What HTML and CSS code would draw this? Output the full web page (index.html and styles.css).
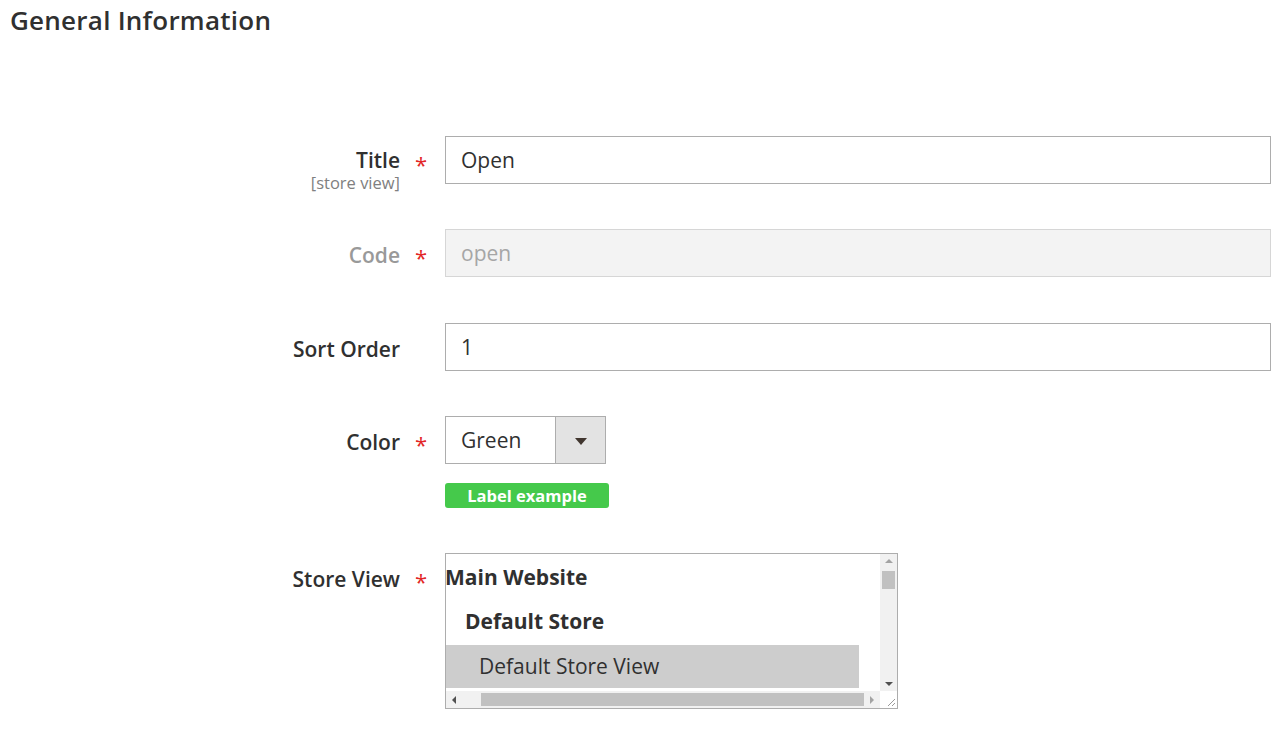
FILE: index.html
```html
<!DOCTYPE html>
<html lang="en">
<head>
    <meta charset="UTF-8">
    <title>General Information</title>
    <link rel="stylesheet" href="styles.css">
</head>
<body>
    <div class="page">
        <h1 class="section-title">General Information</h1>

        <form class="admin-form">
            <div class="field">
                <div class="field-label with-scope">
                    <span>Title</span>
                    <span class="scope">[store view]</span>
                </div>
                <div class="required">*</div>
                <div class="field-control">
                    <input class="text-input" type="text" value="Open">
                </div>
            </div>

            <div class="field">
                <div class="field-label disabled"><span>Code</span></div>
                <div class="required">*</div>
                <div class="field-control">
                    <input class="text-input" type="text" value="open" disabled>
                </div>
            </div>

            <div class="field">
                <div class="field-label"><span>Sort Order</span></div>
                <div class="required"></div>
                <div class="field-control">
                    <input class="text-input" type="text" value="1">
                </div>
            </div>

            <div class="field">
                <div class="field-label"><span>Color</span></div>
                <div class="required">*</div>
                <div class="field-control">
                    <div class="select-box">
                        <span class="select-value">Green</span>
                        <span class="select-button"><span class="arrow"></span></span>
                    </div>
                    <div class="label-example">Label example</div>
                </div>
            </div>

            <div class="field store-field">
                <div class="field-label"><span>Store View</span></div>
                <div class="required">*</div>
                <div class="field-control">
                    <div class="multiselect">
                        <div class="options">
                            <div class="opt group">Main Website</div>
                            <div class="opt group store">Default Store</div>
                            <div class="opt view selected">Default Store View</div>
                        </div>
                        <div class="vscroll">
                            <span class="sb-arrow up"></span>
                            <span class="vthumb"></span>
                            <span class="sb-arrow down"></span>
                        </div>
                        <div class="hscroll">
                            <span class="sb-arrow left"></span>
                            <span class="hthumb"></span>
                            <span class="sb-arrow right"></span>
                        </div>
                        <div class="corner">
                            <svg width="17" height="17" viewBox="0 0 17 17">
                                <path d="M8 15 L15 8 M12 15 L15 12" stroke="#9a9a9a" stroke-width="1" fill="none"/>
                            </svg>
                        </div>
                    </div>
                </div>
            </div>
        </form>
    </div>
</body>
</html>
```

FILE: styles.css
```css
body {
    margin: 0;
    padding: 0;
    background: #fff;
    font-family: "Open Sans", "Noto Sans", sans-serif;
    color: #303030;
}

.page {
    padding: 5px 16px 0 10px;
}

.section-title {
    margin: 0;
    font-size: 26px;
    font-weight: 600;
    line-height: 1.2;
    letter-spacing: 0.25px;
    color: #303030;
}

.admin-form {
    margin-top: 100px;
    margin-left: -10px;
}

.field {
    display: grid;
    grid-template-columns: 400px 45px 1fr;
    align-items: start;
    margin-bottom: 45px;
}

.field:nth-child(2) {
    margin-bottom: 46px;
}

.field-label {
    display: flex;
    flex-direction: column;
    align-items: flex-end;
    box-sizing: border-box;
    height: 48px;
    padding-top: 12px;
    font-size: 21px;
    font-weight: 600;
    line-height: 28px;
    color: #303030;
}

.field-label.with-scope {
    padding-top: 10px;
}

.field-label.disabled {
    color: #999;
}

.scope {
    font-size: 16.5px;
    font-weight: 400;
    line-height: 18px;
    color: #808080;
}

.required {
    box-sizing: border-box;
    height: 48px;
    padding: 14px 0 0 15px;
    font-size: 22px;
    line-height: 28px;
    color: #e22626;
}

.text-input {
    display: block;
    box-sizing: border-box;
    width: 100%;
    height: 48px;
    padding: 0 15px;
    border: 1px solid #adadad;
    font-family: inherit;
    font-size: 21px;
    color: #303030;
    background: #fff;
    outline: none;
}

.text-input:disabled {
    background: #f3f3f3;
    border-color: #d6d6d6;
    color: #a6a6a6;
}

/* select */
.select-box {
    display: flex;
    box-sizing: border-box;
    width: 161px;
    height: 48px;
    border: 1px solid #adadad;
}

.select-value {
    flex: 1;
    padding-left: 15px;
    font-size: 21px;
    line-height: 46px;
}

.select-button {
    display: flex;
    align-items: center;
    justify-content: center;
    width: 49px;
    background: #e3e3e3;
    border-left: 1px solid #adadad;
}

.arrow {
    width: 0;
    height: 0;
    border-left: 6px solid transparent;
    border-right: 6px solid transparent;
    border-top: 7px solid #41362f;
    margin-top: 2px;
}

.label-example {
    width: 164px;
    height: 25px;
    margin-top: 19px;
    border-radius: 3px;
    background: #45c94b;
    color: #fff;
    font-size: 16.5px;
    font-weight: 700;
    line-height: 25px;
    text-align: center;
}

/* multiselect */
.multiselect {
    position: relative;
    box-sizing: border-box;
    width: 453px;
    height: 156px;
    border: 1px solid #adadad;
    overflow: hidden;
}

.options {
    padding-top: 1px;
    width: 413px;
}

.opt {
    height: 44px;
    font-size: 21px;
    line-height: 44px;
    white-space: nowrap;
}

.opt.group {
    font-weight: 700;
    margin-left: -1px;
}

.opt.store {
    padding-left: 20px;
    height: 46px;
}

.opt.view {
    padding-left: 33px;
    height: 43px;
    line-height: 43px;
}

.opt.selected {
    background: #cdcdcd;
}

.vscroll {
    position: absolute;
    top: 0;
    right: 0;
    width: 17px;
    bottom: 17px;
    background: #f1f1f1;
}

.vthumb {
    position: absolute;
    top: 17px;
    left: 2px;
    width: 13px;
    height: 18px;
    background: #c1c1c1;
}

.hscroll {
    position: absolute;
    left: 0;
    right: 17px;
    bottom: 0;
    height: 17px;
    background: #f1f1f1;
}

.hthumb {
    position: absolute;
    left: 35px;
    top: 2px;
    width: 383px;
    height: 13px;
    background: #c1c1c1;
}

.corner {
    position: absolute;
    right: 0;
    bottom: 0;
    width: 17px;
    height: 17px;
    background: #fff;
}

.corner svg {
    display: block;
}

.sb-arrow {
    position: absolute;
    width: 0;
    height: 0;
}

.sb-arrow.up {
    top: 5px;
    left: 5px;
    border-left: 4px solid transparent;
    border-right: 4px solid transparent;
    border-bottom: 4px solid #a3a3a3;
}

.sb-arrow.down {
    bottom: 5px;
    left: 5px;
    border-left: 4px solid transparent;
    border-right: 4px solid transparent;
    border-top: 4px solid #505050;
}

.sb-arrow.left {
    left: 6px;
    top: 5px;
    border-top: 4px solid transparent;
    border-bottom: 4px solid transparent;
    border-right: 4px solid #505050;
}

.sb-arrow.right {
    right: 6px;
    top: 5px;
    border-top: 4px solid transparent;
    border-bottom: 4px solid transparent;
    border-left: 4px solid #a3a3a3;
}
```
